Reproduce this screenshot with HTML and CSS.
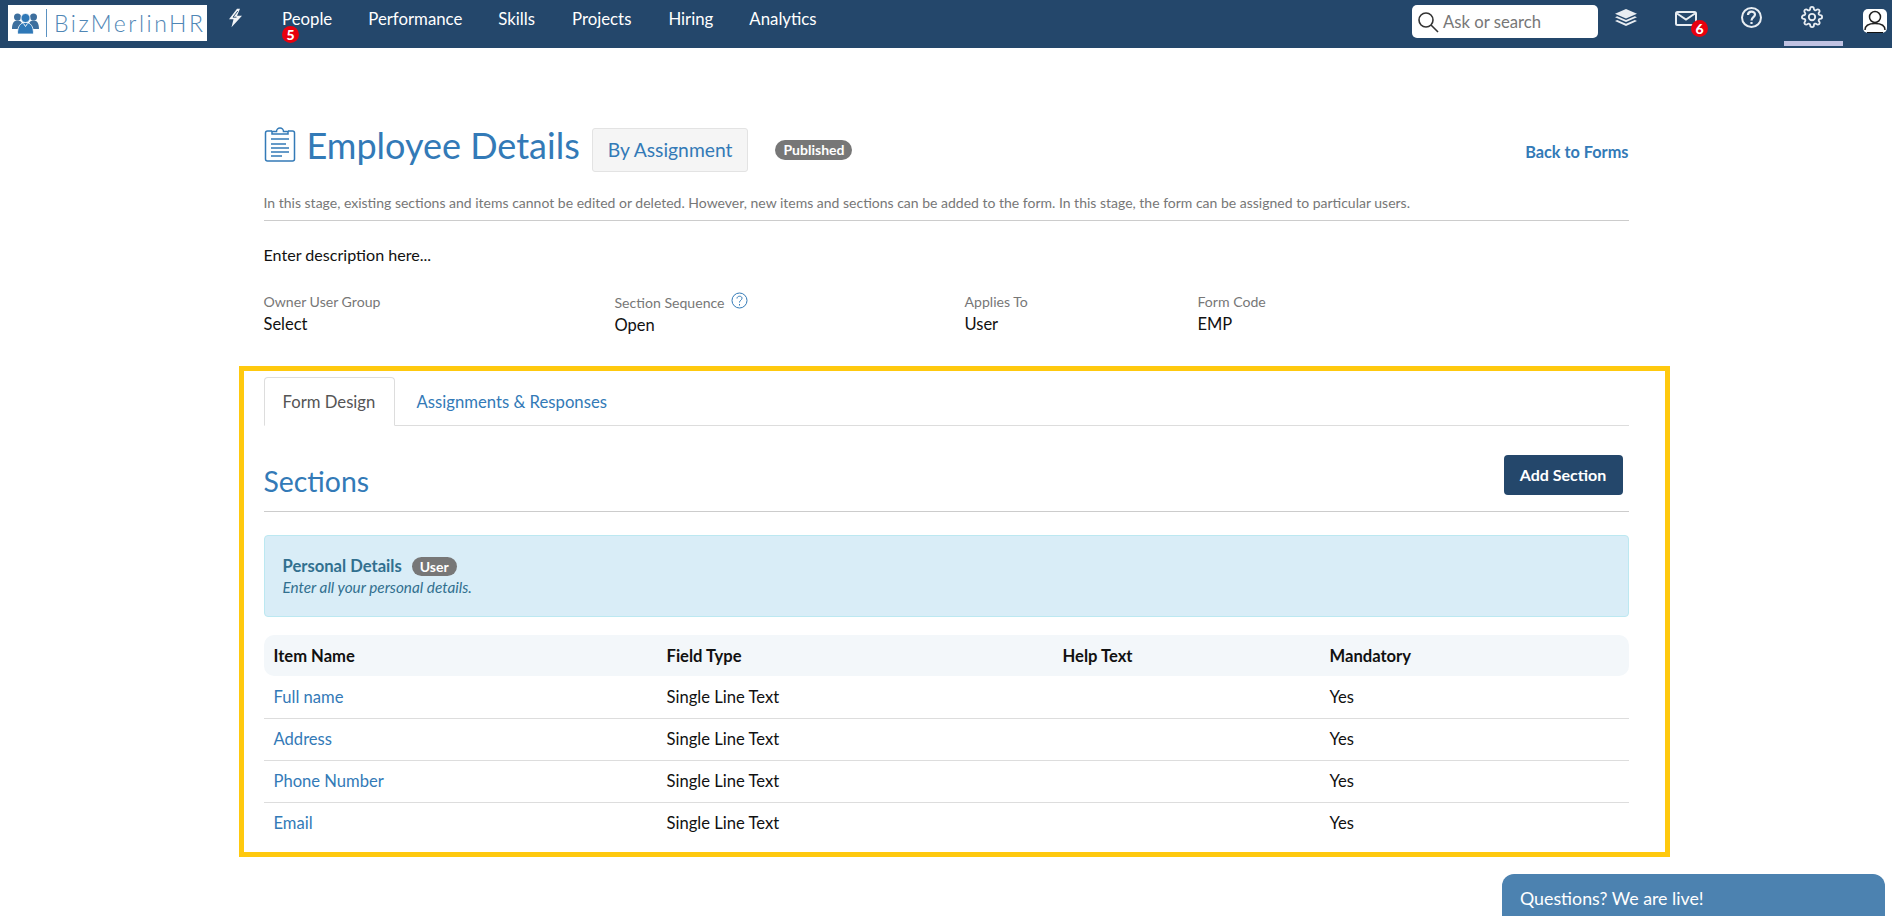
FILE: index.html
```html
<!DOCTYPE html>
<html lang="en">
<head>
    <meta charset="UTF-8">
    <title>Employee Details</title>
    <link rel="stylesheet" href="styles.css">
</head>
<body>
    <nav class="topbar">
        <a class="logo">
            <svg width="27" height="22" viewBox="0 0 27 22">
                <circle cx="5.500" cy="5" r="3.500" fill="#3d6f9e"/>
                <circle cx="21.500" cy="5" r="3.500" fill="#3d6f9e"/>
                <path d="M0 17c0-6 2-8.500 5.500-8.500S11 11 11 17zM16 17c0-6 2-8.500 5.500-8.500S27 11 27 17z" fill="#3d6f9e"/>
                <circle cx="13.500" cy="6" r="4.500" fill="#2f78b7" stroke="#fff" stroke-width=".8"/>
                <path d="M5.500 22c0-8 3-11.500 8-11.500s8 3.500 8 11.500z" fill="#2f78b7" stroke="#fff" stroke-width=".8"/>
                <path d="m11.500 11.500 2 3 2-3" fill="none" stroke="#fff" stroke-width=".9"/>
            </svg>
            <span class="logo-bar"></span>
            <span class="logo-text">BizMerlinHR</span>
        </a>
        <svg class="bolt" width="15" height="20" viewBox="0 0 15 20">
            <path d="M9 .8 1 11.200h4.500L3.500 19.200 14 7.800H9L12 .8z" fill="#f2f4f7"/>
            <path d="M9.800 3 5 9.200h3.500" fill="none" stroke="#24476b" stroke-width=".9"/>
        </svg>
        <ul class="menu">
            <li class="menu-people">People<span class="count count-people">5</span></li>
            <li class="menu-performance">Performance</li>
            <li class="menu-skills">Skills</li>
            <li class="menu-projects">Projects</li>
            <li class="menu-hiring">Hiring</li>
            <li>Analytics</li>
        </ul>
        <div class="topbar-right">
            <div class="search">
                <svg width="22" height="22" viewBox="0 0 22 22" fill="none" stroke="#333" stroke-width="1.6">
                    <circle cx="9" cy="9" r="7"/>
                    <path d="m14 14 7 7"/>
                </svg>
                <span>Ask or search</span>
            </div>
            <div class="nav-icon icon-layers">
                <svg width="22" height="17" viewBox="0 0 22 17" fill="#e8edf2">
                    <path d="M11 0 22 4.700 11 9.400 0 4.700z"/>
                    <path d="M2.200 7.300 0 8.300 11 13 22 8.300 19.800 7.300 11 11z"/>
                    <path d="M2.200 10.900 0 11.900 11 17 22 11.900 19.800 10.900 11 14.700z"/>
                </svg>
            </div>
            <div class="nav-icon icon-mail">
                <svg width="22" height="15" viewBox="0 0 22 15" fill="none" stroke="#e8edf2" stroke-width="2">
                    <rect x="1" y="1" width="20" height="13" rx="1.500"/>
                    <path d="m2 2.500 9 6 9-6"/>
                </svg>
                <span class="count count-mail">6</span>
            </div>
            <div class="nav-icon icon-help">
                <svg width="21" height="21" viewBox="0 0 21 21" fill="none" stroke="#e8edf2" stroke-width="2">
                    <circle cx="10.500" cy="10.500" r="9.500"/>
                    <path d="M7 8c0-4.500 7-4.500 7-.500 0 2.500-3.500 2.800-3.500 6" stroke-width="2.200"/>
                    <path d="M10.500 15v2" stroke-width="2.200"/>
                </svg>
            </div>
            <div class="nav-icon icon-gear">
                <svg width="22" height="22" viewBox="0 0 24 24" fill="none" stroke="#e8edf2" stroke-width="2">
                    <circle cx="12" cy="12" r="3.500"/>
                    <path d="M19.400 15a1.650 1.650 0 0 0 .33 1.820l.06.06a2 2 0 0 1 0 2.830 2 2 0 0 1-2.830 0l-.06-.06a1.650 1.650 0 0 0-1.820-.33 1.650 1.650 0 0 0-1 1.510V21a2 2 0 0 1-2 2 2 2 0 0 1-2-2v-.09A1.650 1.650 0 0 0 9 19.400a1.650 1.650 0 0 0-1.820.33l-.06.06a2 2 0 0 1-2.830 0 2 2 0 0 1 0-2.830l.06-.06a1.650 1.650 0 0 0 .33-1.820 1.650 1.650 0 0 0-1.510-1H3a2 2 0 0 1-2-2 2 2 0 0 1 2-2h.09A1.650 1.650 0 0 0 4.600 9a1.650 1.650 0 0 0-.33-1.820l-.06-.06a2 2 0 0 1 0-2.830 2 2 0 0 1 2.830 0l.06.06a1.650 1.650 0 0 0 1.820.33H9a1.650 1.650 0 0 0 1-1.510V3a2 2 0 0 1 2-2 2 2 0 0 1 2 2v.09a1.650 1.650 0 0 0 1 1.510 1.650 1.650 0 0 0 1.820-.33l.06-.06a2 2 0 0 1 2.830 0 2 2 0 0 1 0 2.830l-.06.06a1.650 1.650 0 0 0-.33 1.820V9a1.650 1.650 0 0 0 1.510 1H21a2 2 0 0 1 2 2 2 2 0 0 1-2 2h-.09a1.650 1.650 0 0 0-1.510 1z"/>
                </svg>
            </div>
            <div class="nav-icon icon-user">
                <svg width="24" height="24" viewBox="0 0 24 24">
                    <path d="M5 0h14a5 5 0 0 1 5 5v14a5 5 0 0 1-5 5H5a5 5 0 0 1-5-5V5a5 5 0 0 1 5-5z" fill="#fff"/>
                    <circle cx="12" cy="8" r="5.500" fill="none" stroke="#222" stroke-width="1.500"/>
                    <path d="M2 21c0-5 5-6.500 10-6.500s10 1.500 10 6.500" fill="none" stroke="#222" stroke-width="1.500"/>
                    <path d="M4 23.500h16" stroke="#111" stroke-width="1"/>
                </svg>
            </div>
        </div>
    </nav>

    <main class="page">
        <header class="title-row">
            <svg class="title-icon" width="32" height="38" viewBox="0 0 32 38" fill="none" stroke="#337ab7" stroke-width="1.500">
                <path d="M8 6H3.500a2 2 0 0 0-2 2v26a2 2 0 0 0 2 2h25a2 2 0 0 0 2-2V8a2 2 0 0 0-2-2H24"/>
                <path d="M8 9V6.500h4.500a3.500 3.500 0 0 1 7 0H24V9z"/>
                <path d="M7 14h18M7 19h15M7 23h18M7 27h18M7 31h11" stroke-width="1.700"/>
            </svg>
            <h1>Employee Details</h1>
            <span class="well-tag">By Assignment</span>
            <span class="badge badge-published">Published</span>
            <a class="back-link">Back to Forms</a>
        </header>
        <p class="stage-note">In this stage, existing sections and items cannot be edited or deleted. However, new items and sections can be added to the form. In this stage, the form can be assigned to particular users.</p>
        <p class="description">Enter description here...</p>

        <div class="meta">
            <div class="meta-item meta-owner">
                <label>Owner User Group</label>
                <span>Select</span>
            </div>
            <div class="meta-item meta-sequence">
                <label>Section Sequence
                    <svg width="17" height="17" viewBox="0 0 17 17" fill="none" stroke="#337ab7">
                        <circle cx="8.500" cy="8.500" r="7.500"/>
                        <path d="M6 6.500c0-3 5-3 5-.300 0 2-2.500 2-2.500 4.300M8.500 12v1.500"/>
                    </svg>
                </label>
                <span>Open</span>
            </div>
            <div class="meta-item meta-applies">
                <label>Applies To</label>
                <span>User</span>
            </div>
            <div class="meta-item">
                <label>Form Code</label>
                <span>EMP</span>
            </div>
        </div>

        <section class="highlight">
            <div class="tabs">
                <a class="tab tab-active">Form Design</a>
                <a class="tab">Assignments &amp; Responses</a>
            </div>

            <div class="sections-head">
                <h2>Sections</h2>
                <button class="add-btn">Add Section</button>
            </div>

            <div class="section-info">
                <div class="section-title"><strong>Personal Details</strong><span class="badge badge-user">User</span></div>
                <em>Enter all your personal details.</em>
            </div>

            <table class="items">
                <thead>
                    <tr><th class="col-name">Item Name</th><th class="col-type">Field Type</th><th class="col-help">Help Text</th><th>Mandatory</th></tr>
                </thead>
                <tbody>
                    <tr><td><a>Full name</a></td><td>Single Line Text</td><td></td><td>Yes</td></tr>
                    <tr><td><a>Address</a></td><td>Single Line Text</td><td></td><td>Yes</td></tr>
                    <tr><td><a>Phone Number</a></td><td>Single Line Text</td><td></td><td>Yes</td></tr>
                    <tr><td><a>Email</a></td><td>Single Line Text</td><td></td><td>Yes</td></tr>
                </tbody>
            </table>
        </section>
    </main>

    <div class="chat">Questions? We are live!</div>
</body>
</html>
```

FILE: styles.css
```css
* {
    box-sizing: border-box;
}

html, body {
    height: 916px;
    overflow: hidden;
}

body {
    margin: 0;
    font-family: Lato, "Open Sans", sans-serif;
    font-size: 16px;
    color: #111;
    background-color: #fff;
}

a {
    color: #337ab7;
    text-decoration: none;
}

/* top navigation */
.topbar {
    display: flex;
    align-items: flex-start;
    height: 48px;
    background-color: #24476b;
    color: #fff;
}

.logo {
    display: flex;
    align-items: center;
    width: 199px;
    height: 36px;
    margin: 5px 0 0 8px;
    padding-left: 4px;
    background-color: #fff;
}

.logo-bar {
    width: 1px;
    height: 28px;
    margin: 0 7px;
    background-color: #5b92c2;
}

.logo-text {
    font-size: 23px;
    font-weight: 300;
    letter-spacing: 2.500px;
    color: #4f86b5;
}

.bolt {
    margin: 8px 0 0 21px;
}

.menu {
    display: flex;
    margin: 9px 0 0 39px;
    padding: 0;
    list-style: none;
    font-size: 16.800px;
    line-height: 20px;
}

.menu-people {
    position: relative;
    margin-right: 36px;
}

.menu-performance {
    margin-right: 36px;
}

.menu-skills {
    margin-right: 37px;
}

.menu-projects {
    margin-right: 37px;
}

.menu-hiring {
    margin-right: 36px;
}

.count {
    position: absolute;
    width: 17px;
    height: 17px;
    border-radius: 50%;
    background-color: #e8000d;
    font-size: 14px;
    font-weight: 900;
    line-height: 17px;
    text-align: center;
    color: #fff;
}

.count-people {
    left: 0;
    top: 17px;
}

.count-mail {
    left: 35px;
    top: 20px;
}

.topbar-right {
    display: flex;
    margin-left: auto;
}

.search {
    display: flex;
    align-items: center;
    gap: 4px;
    width: 186px;
    height: 33px;
    margin: 5px 4px 0 0;
    padding-left: 5px;
    border-radius: 5px;
    background-color: #fff;
    font-size: 16.700px;
    color: #777;
}

.nav-icon {
    position: relative;
    display: flex;
    justify-content: center;
    height: 46px;
}

.icon-layers {
    width: 48px;
    padding-top: 9px;
}

.icon-mail {
    width: 60px;
    padding-top: 11px;
    margin-left: 6px;
}

.icon-help {
    width: 60px;
    padding-top: 7px;
    margin: 0 3px 0 5px;
}

.icon-gear {
    width: 59px;
    padding: 6px 3px 0 0;
    border-bottom: 5px solid #c0c2e2;
}

.icon-user {
    width: 34px;
    margin-left: 15px;
    padding-top: 9px;
}

.icon-user svg {
    width: 28px;
}

/* page body */
.page {
    width: 1365px;
    margin: 0 auto;
    padding-top: 80px;
}

.title-row {
    display: flex;
    align-items: center;
    height: 44px;
}

.title-icon {
    margin-top: -12px;
}

h1 {
    margin: -10px 0 0 11px;
    font-size: 36px;
    font-weight: 400;
    color: #337ab7;
}

.well-tag {
    display: block;
    margin: 0 0 0 12px;
    padding: 10px 15px;
    border: 1px solid #e3e3e3;
    border-radius: 3px;
    background-color: #f5f5f5;
    font-size: 19.300px;
    line-height: 22px;
    color: #337ab7;
}

.badge {
    border-radius: 10px;
    background-color: #777;
    font-size: 14px;
    font-weight: 700;
    line-height: 20px;
    color: #fff;
}

.badge-published {
    margin: 0 0 0 27px;
    padding: 0 8px;
}

.back-link {
    margin: 2px 0 0 auto;
    font-size: 16.300px;
    font-weight: 700;
}

.stage-note {
    margin: 22px 0 0;
    padding-bottom: 9px;
    border-bottom: 1px solid #ccc;
    font-size: 14px;
    line-height: 17px;
    color: #777;
}

.description {
    margin: 24px 0 0;
    font-size: 16.100px;
    line-height: 20px;
}

.meta {
    display: flex;
    margin-top: 27px;
    font-size: 16.500px;
    line-height: 20px;
}

.meta-item label {
    display: block;
    font-size: 14.100px;
    color: #777;
}

.meta-item svg {
    vertical-align: -1px;
    margin-left: 3px;
}

.meta-item span {
    display: block;
    margin-top: 2px;
}

.meta-owner {
    width: 351px;
}

.meta-sequence {
    width: 350px;
}

.meta-applies {
    width: 233px;
}

/* yellow framed part */
.highlight {
    margin: 31px -41px 0 -25px;
    height: 491px;
    padding: 6px 36px 0 20px;
    border: 5px solid #ffc90e;
}

.tabs {
    display: flex;
    height: 49px;
    border-bottom: 1px solid #ddd;
    font-size: 16.700px;
}

.tab {
    height: 49px;
    padding: 15px 18px 0;
    line-height: 20px;
}

.tab-active {
    border: 1px solid #ddd;
    border-bottom-color: #fff;
    border-radius: 4px 4px 0 0;
    padding: 14px 18px 0;
    width: 131px;
    color: #555;
}

.tab-active + .tab {
    padding-left: 22px;
}

.sections-head {
    display: flex;
    justify-content: space-between;
    height: 86px;
    padding: 29px 6px 0 0;
    border-bottom: 1px solid #ccc;
}

h2 {
    margin: 8px 0 0;
    font-size: 28.400px;
    font-weight: 400;
    line-height: 36px;
    color: #337ab7;
}

.add-btn {
    width: 119px;
    height: 40px;
    padding: 0 0 2px;
    border: 0;
    border-radius: 4px;
    background-color: #24476b;
    font-family: inherit;
    font-size: 16px;
    font-weight: 700;
    color: #fff;
}

.section-info {
    height: 82px;
    margin-top: 23px;
    padding: 19px 18px 0;
    border: 1px solid #bce8f1;
    border-radius: 4px;
    background-color: #d9edf7;
    color: #31708f;
}

.section-title {
    line-height: 22px;
    font-size: 16.600px;
}

.section-info em {
    display: block;
    margin-top: 1px;
    font-size: 15.300px;
    line-height: 18px;
}

.badge-user {
    margin-left: 10px;
    padding: 1px 8px;
}

.items {
    width: 100%;
    margin-top: 18px;
    border-collapse: collapse;
    font-size: 16.600px;
}

.items th {
    height: 41px;
    padding: 0 10px;
    background-color: #f3f7fa;
    text-align: left;
    font-weight: 700;
}

.items th:first-child {
    border-radius: 10px 0 0 10px;
}

.items th:last-child {
    border-radius: 0 10px 10px 0;
}

.items td {
    height: 42px;
    padding: 0 10px;
    border-top: 1px solid #ddd;
}

.items tbody tr:first-child td {
    border-top: 0;
}

.col-name {
    width: 393px;
}

.col-type {
    width: 396px;
}

.col-help {
    width: 267px;
}

/* chat box */
.chat {
    position: fixed;
    left: 1502px;
    top: 874px;
    width: 383px;
    height: 42px;
    padding: 12px 18px 0;
    border-radius: 12px 12px 0 0;
    background-color: #4c82b0;
    font-size: 17.800px;
    line-height: 24px;
    color: #fff;
}
```
